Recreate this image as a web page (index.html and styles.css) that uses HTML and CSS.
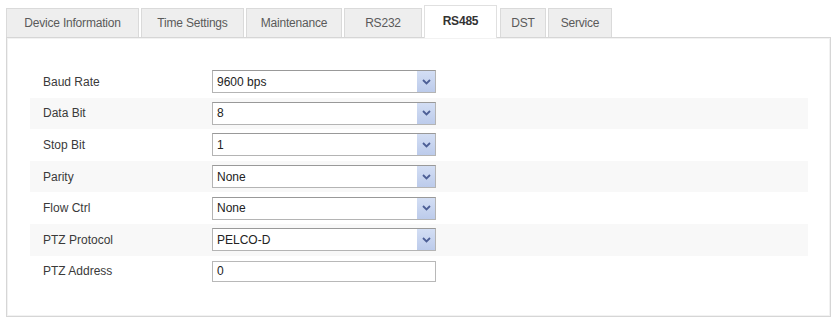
FILE: index.html
```html
<!DOCTYPE html>
<html>
<head>
<meta charset="utf-8">
<link rel="stylesheet" href="styles.css">
</head>
<body>
<div class="page">
  <div class="tabs">
    <div class="tab t1">Device Information</div>
    <div class="tab t2">Time Settings</div>
    <div class="tab t3">Maintenance</div>
    <div class="tab t4">RS232</div>
    <div class="tab t5 active">RS485</div>
    <div class="tab t6">DST</div>
    <div class="tab t7">Service</div>
  </div>
  <div class="panel">
    <div class="row"><div class="label">Baud Rate</div><div class="select"><span class="val">9600 bps</span><span class="arrow"><svg width="9" height="6" viewBox="0 0 9 6"><path d="M1 1 L4.5 4.5 L8 1" fill="none" stroke="#4d5f96" stroke-width="1.8"/></svg></span></div></div>
    <div class="row stripe"><div class="label">Data Bit</div><div class="select"><span class="val">8</span><span class="arrow"><svg width="9" height="6" viewBox="0 0 9 6"><path d="M1 1 L4.5 4.5 L8 1" fill="none" stroke="#4d5f96" stroke-width="1.8"/></svg></span></div></div>
    <div class="row"><div class="label">Stop Bit</div><div class="select"><span class="val">1</span><span class="arrow"><svg width="9" height="6" viewBox="0 0 9 6"><path d="M1 1 L4.5 4.5 L8 1" fill="none" stroke="#4d5f96" stroke-width="1.8"/></svg></span></div></div>
    <div class="row stripe"><div class="label">Parity</div><div class="select"><span class="val">None</span><span class="arrow"><svg width="9" height="6" viewBox="0 0 9 6"><path d="M1 1 L4.5 4.5 L8 1" fill="none" stroke="#4d5f96" stroke-width="1.8"/></svg></span></div></div>
    <div class="row"><div class="label">Flow Ctrl</div><div class="select"><span class="val">None</span><span class="arrow"><svg width="9" height="6" viewBox="0 0 9 6"><path d="M1 1 L4.5 4.5 L8 1" fill="none" stroke="#4d5f96" stroke-width="1.8"/></svg></span></div></div>
    <div class="row stripe"><div class="label">PTZ Protocol</div><div class="select"><span class="val">PELCO-D</span><span class="arrow"><svg width="9" height="6" viewBox="0 0 9 6"><path d="M1 1 L4.5 4.5 L8 1" fill="none" stroke="#4d5f96" stroke-width="1.8"/></svg></span></div></div>
    <div class="row"><div class="label">PTZ Address</div><div class="input">0</div></div>
  </div>
</div>
</body>
</html>
```
FILE: styles.css
```css
html, body {
  margin: 0;
  padding: 0;
  background: #ffffff;
}
body {
  font-family: "Liberation Sans", Arial, sans-serif;
  font-size: 12px;
  color: #333;
}
.page {
  padding: 5px 4px 0 6px;
  width: 835px;
  box-sizing: border-box;
}
.tabs {
  display: flex;
  align-items: flex-end;
  gap: 2px;
  height: 32px;
}
.tab {
  height: 29px;
  box-sizing: border-box;
  border: 1px solid #dadada;
  border-bottom: none;
  background: #eeeeee;
  color: #5a5a5a;
  font-size: 12px;
  line-height: 28px;
  text-align: center;
  letter-spacing: -0.2px;
}
.t1 { width: 133px; }
.t2 { width: 103px; }
.t3 { width: 96px; }
.t4 { width: 78px; }
.t5 { width: 73px; }
.t6 { width: 46px; margin-left: 1px; }
.t7 { width: 64px; }
.tab.active {
  height: 33px;
  line-height: 31px;
  background: #ffffff;
  color: #333;
  font-weight: bold;
  border-color: #e0e0e0;
  position: relative;
  z-index: 1;
  margin-bottom: -1px;
}
.panel {
  border: 1px solid #d6d6d6;
  box-shadow: inset 0 0 0 1px #f2f2f2;
  height: 280px;
  box-sizing: border-box;
  padding: 28px 22px 0 23px;
}
.row {
  display: flex;
  align-items: center;
  height: 31.6px;
  padding-left: 13px;
}
.row.stripe {
  background: #f8f8f8;
}
.label {
  width: 169px;
  color: #3a3a3a;
  font-size: 12px;
}
.select, .input {
  width: 224px;
  height: 23px;
  box-sizing: border-box;
  border: 1px solid #b4b4b4;
  border-top-color: #999;
  background: #fff;
  display: flex;
  align-items: center;
  font-size: 12px;
  color: #222;
}
.val {
  flex: 1;
  padding-left: 4px;
}
.arrow {
  width: 18px;
  height: 21px;
  background: linear-gradient(#d3def4, #bccbeb);
  display: flex;
  align-items: center;
  justify-content: center;
}
.input {
  height: 21px;
  padding-left: 4px;
  border-color: #b8b8b8;
}
```
